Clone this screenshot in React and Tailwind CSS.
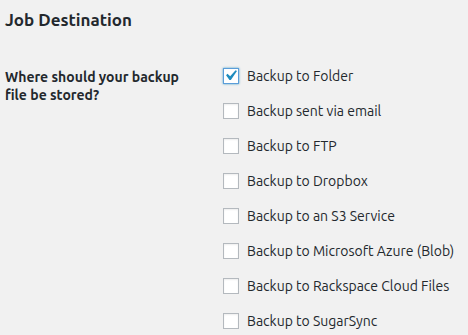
import React, { useState } from "react";

const destinations = [
    { id: "folder", label: "Backup to Folder" },
    { id: "email", label: "Backup sent via email" },
    { id: "ftp", label: "Backup to FTP" },
    { id: "dropbox", label: "Backup to Dropbox" },
    { id: "s3", label: "Backup to an S3 Service" },
    { id: "azure", label: "Backup to Microsoft Azure (Blob)" },
    { id: "rsc", label: "Backup to Rackspace Cloud Files" },
    { id: "sugarsync", label: "Backup to SugarSync" },
];

const CheckBox = ({ checked, onChange }) => (
    <button
        type="button"
        onClick={onChange}
        className={
            checked
                ? "w-4 h-4 bg-white border border-[#5b9dd9] shadow-[0_0_2px_rgba(30,140,190,0.8)] flex items-center justify-center shrink-0 overflow-visible"
                : "w-4 h-4 bg-white border border-[#b4b9be] shadow-[inset_0_1px_2px_rgba(0,0,0,0.07)] flex items-center justify-center shrink-0"
        }
    >
        {checked && (
            <svg width="21" height="21" viewBox="0 0 20 20" className="shrink-0 -ml-[1px] -mt-[1px]">
                <path d="M14.83 4.89l1.34.94-5.81 8.38H9.02L5.78 9.67l1.34-1.25 2.57 2.4z" fill="#1e8cbe" />
            </svg>
        )}
    </button>
);

export default function App() {
    const [selected, setSelected] = useState(["folder"]);

    const toggle = (id) => {
        setSelected((prev) => (prev.includes(id) ? prev.filter((x) => x !== id) : [...prev, id]));
    };

    return (
        <div className="w-[468px] h-[335px] bg-[#f1f1f1] text-[#23282d] font-['Ubuntu','Noto_Sans',sans-serif] overflow-hidden">
            <h3 className="px-[5px] pt-[8px] text-[17px] font-bold leading-[24px]">Job Destination</h3>
            <div className="flex mt-[36px]">
                <div className="w-[218px] shrink-0 pl-[5px] pr-[33px] text-[14px] font-bold leading-[18px]">
                    Where should your backup file be stored?
                </div>
                <div className="flex flex-col gap-[19px] pl-[5px]">
                    {destinations.map((d) => (
                        <label key={d.id} className="flex items-center gap-[8px] text-[14px] leading-[16px] cursor-pointer">
                            <CheckBox checked={selected.includes(d.id)} onChange={() => toggle(d.id)} />
                            <span>{d.label}</span>
                        </label>
                    ))}
                </div>
            </div>
        </div>
    );
}
